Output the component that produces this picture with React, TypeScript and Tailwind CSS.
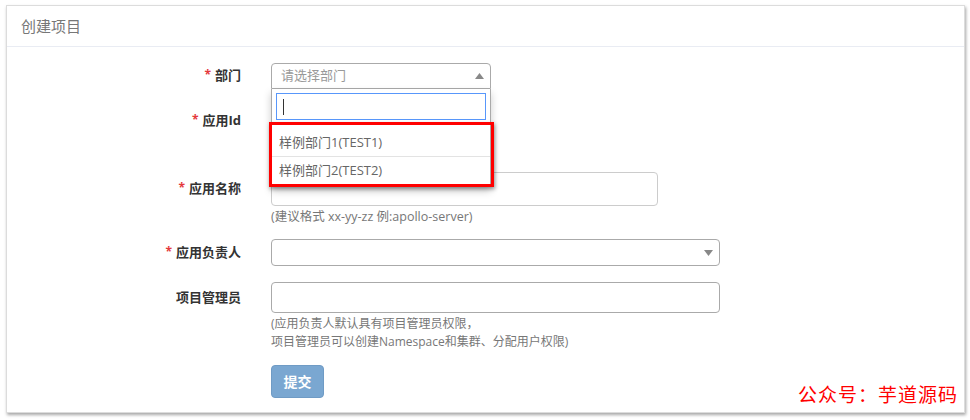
import React from "react";

const font = { fontFamily: '"Open Sans", "Noto Sans CJK SC", sans-serif' };

const Caret = ({ up }: { up?: boolean }) => (
  <svg width="9" height="6" viewBox="0 0 9 6" className="block">
    {up ? <path d="M0 6 L4.5 0 L9 6 Z" fill="#888" /> : <path d="M0 0 L4.5 6 L9 0 Z" fill="#888" />}
  </svg>
);

const Label = ({ text, required }: { text: string; required?: boolean }) => (
  <div className="w-[234px] shrink-0 text-right text-[13px] font-bold text-[#333]">
    {required && <span className="text-[#e4393c] mr-[4px] text-[12px] align-top">*</span>}
    {text}
  </div>
);

export default function App() {
  return (
    <div className="relative w-[970px] h-[420px] bg-white overflow-hidden" style={font}>
      <div className="ml-[6px] mt-[5px] w-[959px] h-[408px] bg-white border border-[#dcdcdc] shadow-[1px_2px_3px_rgba(0,0,0,0.35)]">
        <div className="h-[41px] border-b border-[#e9ecf3] pl-[14px] flex items-center text-[15px] text-[#777]">
          创建项目
        </div>

        {/* 部门 */}
        <div className="flex items-center mt-[16px]">
          <Label text="部门" required />
          <div className="relative ml-[30px]">
            <div className="w-[220px] h-[26px] border border-[#aaa] rounded-t-[4px] flex items-center justify-between pl-[9px] pr-[6px] text-[13px] text-[#999]">
              请选择部门
              <Caret up />
            </div>
            <div className="absolute left-0 top-[26px] w-[220px] h-[98px] bg-white border-x border-b border-[#aaa] shadow-[0_4px_8px_rgba(0,0,0,0.2)] z-10">
              <div className="mx-[4px] mt-[4px] h-[27px] border border-[#5897fb] flex items-center pl-[6px]">
                <div className="w-px h-[16px] bg-[#333]" />
              </div>
              <div className="mt-[9px] h-[28px] flex items-center pl-[7px] text-[13px] text-[#666] border-b border-[#e3e3e3]">
                样例部门1(TEST1)
              </div>
              <div className="h-[27px] flex items-center pl-[7px] text-[13px] text-[#666]">
                样例部门2(TEST2)
              </div>
              <div className="absolute left-[-3px] top-[33px] w-[225px] h-[65px] border-[3px] border-[#f00] shadow-[1px_2px_4px_rgba(0,0,0,0.4)]" />
            </div>
          </div>
        </div>

        {/* 应用Id */}
        <div className="flex items-center mt-[17px] h-[30px]">
          <Label text="应用Id" required />
        </div>

        {/* 应用名称 */}
        <div className="flex mt-[36px]">
          <div className="h-[34px] flex items-center">
            <Label text="应用名称" required />
          </div>
          <div className="ml-[30px]">
            <div className="w-[387px] h-[34px] border border-[#ccc] rounded-[4px]" />
            <div className="mt-[3px] text-[12.5px] leading-[16px] text-[#777]">(建议格式 xx-yy-zz 例:apollo-server)</div>
          </div>
        </div>

        {/* 应用负责人 */}
        <div className="flex items-center mt-[14px]">
          <Label text="应用负责人" required />
          <div className="ml-[30px] w-[449px] h-[27px] border border-[#aaa] rounded-[4px] flex items-center justify-end pr-[6px]">
            <Caret />
          </div>
        </div>

        {/* 项目管理员 */}
        <div className="flex mt-[16px]">
          <div className="h-[31px] flex items-center">
            <Label text="项目管理员" />
          </div>
          <div className="ml-[30px]">
            <div className="w-[449px] h-[31px] border border-[#aaa] rounded-[4px]" />
            <div className="mt-[2px] text-[12px] leading-[18px] text-[#777]">
              <div>(应用负责人默认具有项目管理员权限，</div>
              <div>项目管理员可以创建Namespace和集群、分配用户权限)</div>
            </div>
            <button className="mt-[14px] w-[53px] h-[33px] bg-[#7aa7d1] border border-[#6f9bc5] rounded-[4px] text-white text-[14px] font-semibold">
              提交
            </button>
          </div>
        </div>
      </div>

      <div
        className="absolute right-[12px] bottom-[16px] text-[19px] leading-[20px] text-[#f00] tracking-[1px]"
        style={{ fontFamily: '"Noto Sans CJK SC", sans-serif' }}
      >
        公众号：芋道源码
      </div>
    </div>
  );
}
